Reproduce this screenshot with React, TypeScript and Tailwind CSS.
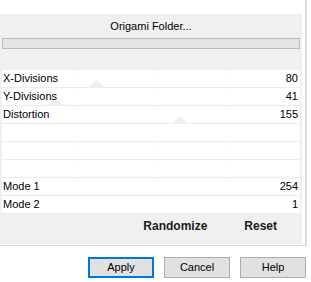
const ROWS: { label: string; value: string; thumb?: number }[] = [
  { label: "X-Divisions", value: "80", thumb: 95 },
  { label: "Y-Divisions", value: "41", thumb: 53 },
  { label: "Distortion", value: "155", thumb: 178 },
  { label: "", value: "" },
  { label: "", value: "" },
  { label: "", value: "" },
  { label: "Mode 1", value: "254" },
  { label: "Mode 2", value: "1" },
];

function Row({ label, value, thumb }: { label: string; value: string; thumb?: number }) {
  return (
    <div className="relative mx-[2px] flex h-[18px] flex-col">
      <div className="relative flex h-[17px] items-center justify-between bg-white pl-[1px] pr-[2px]">
        {/* faint tick marks of the hidden slider track */}
        <span className="absolute left-[75px] top-0 h-[3px] w-px bg-[#f3f3f3]" />
        <span className="absolute left-[151px] top-0 h-[3px] w-px bg-[#f3f3f3]" />
        <span className="absolute left-[228px] top-0 h-[3px] w-px bg-[#f3f3f3]" />
        {thumb !== undefined && (
          <span
            className="absolute bottom-0 h-0 w-0 border-x-[8px] border-b-[7px] border-x-transparent border-b-[#efefef]"
            style={{ left: thumb - 8 }}
          />
        )}
        <span className="relative">{label}</span>
        <span className="relative">{value}</span>
      </div>
      <div className="h-px bg-[#ececec]" />
    </div>
  );
}

function DlgButton({ children, primary }: { children: string; primary?: boolean }) {
  return (
    <div
      className={
        primary
          ? "flex h-[21px] w-[66px] items-center justify-center border-2 border-[#0078d7] bg-[#e1e1e1]"
          : "flex h-[21px] w-[66px] items-center justify-center border border-[#adadad] bg-[#e1e1e1]"
      }
    >
      {children}
    </div>
  );
}

export default function App() {
  return (
    <div className="h-[282px] w-[311px] overflow-hidden bg-white font-['Liberation_Sans',Arial,sans-serif] text-[11px] leading-none text-black">
      <div className="h-[246px] w-[307px] border-b border-r-2 border-[#dcdcdc] pt-[14px]">
        <div className="flex h-[230px] w-[302px] flex-col bg-[#f0f0f0]">
          <div className="flex h-[24px] items-center justify-center text-[11px]">Origami Folder...</div>
          <div className="mx-[2px] h-[11px] border border-[#bcbcbc] bg-[#e4e4e4]" />
          <div className="h-[21px]" />
          {ROWS.map((r, i) => (
            <Row key={i} {...r} />
          ))}
          <div className="flex h-[24px] items-center justify-end gap-[37px] pr-[25px] text-[12px] font-bold text-[#1a1a1a]">
            <span>Randomize</span>
            <span>Reset</span>
          </div>
        </div>
      </div>
      <div className="flex justify-end gap-[10px] pr-[5px] pt-[11px]">
        <DlgButton primary>Apply</DlgButton>
        <DlgButton>Cancel</DlgButton>
        <DlgButton>Help</DlgButton>
      </div>
    </div>
  );
}
